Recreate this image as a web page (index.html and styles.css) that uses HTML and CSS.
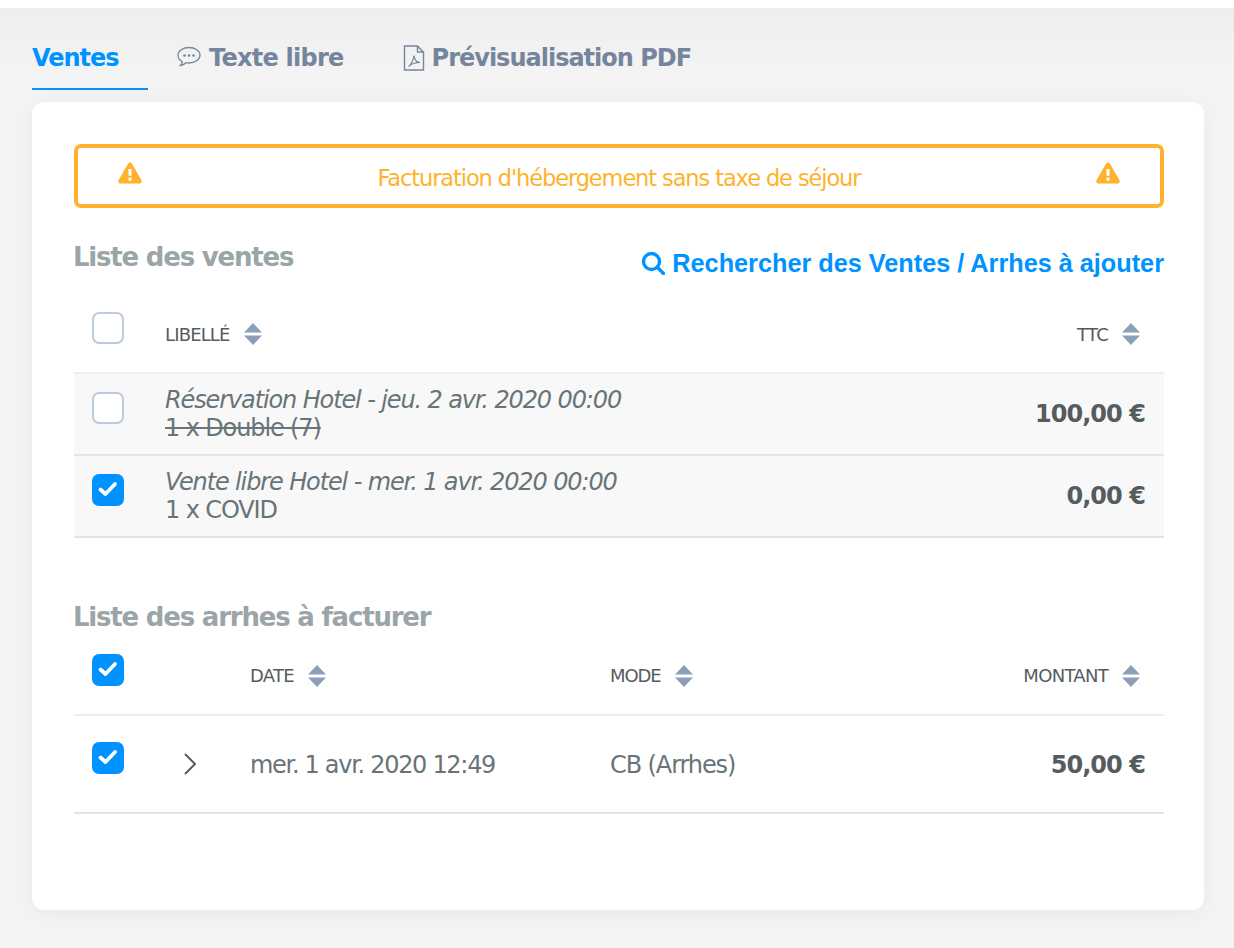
FILE: index.html
```html
<!DOCTYPE html>
<html lang="fr">
<head>
<meta charset="utf-8">
<title>Facture</title>
<link rel="stylesheet" href="styles.css">
</head>
<body>
<svg class="defs" width="0" height="0" aria-hidden="true">
  <symbol id="sort" viewBox="0 0 18 22"><path d="M9 0 18 9.600H0Z M0 12.400H18L9 22Z"/></symbol>
  <symbol id="warn" viewBox="0 0 24 22"><path fill-rule="evenodd" d="M12 0.500c.8 0 1.500.4 1.900 1.100l9.600 16.700c.8 1.400-.2 3.200-1.900 3.200H2.400c-1.700 0-2.700-1.800-1.900-3.200L10.100 1.600C10.500.9 11.200.5 12 .5ZM10.300 7l.3 6.800h2.800l.3-6.800ZM10.500 15.500v3.200h3v-3.200Z"/></symbol>
  <symbol id="check" viewBox="0 0 32 32"><path d="M8.500 15.500 13.500 20 23 10" fill="none" stroke="#fff" stroke-width="3.800" stroke-linecap="round" stroke-linejoin="round"/></symbol>
</svg>
<main class="page">
  <nav class="tabs">
    <a class="tab active">Ventes</a>
    <a class="tab tab-chat">
      <svg class="tab-icon" width="26" height="22" viewBox="0 0 26 22" fill="none" stroke="#75869c" stroke-width="1.300"><path d="M13 2.500c6 0 11 3.400 11 7.800s-5 7.700-11 7.700c-1 0-2-.1-2.900-.3C8.600 19.300 6.900 20 4.500 20.500c1-1.200 1.700-2.400 1.900-3.700C3.600 15.400 2 13 2 10.300 2 5.900 7 2.500 13 2.500Z"/><circle cx="8.500" cy="10.500" r="1.300" fill="#75869c" stroke="none"/><circle cx="13" cy="10.500" r="1.300" fill="#75869c" stroke="none"/><circle cx="17.500" cy="10.500" r="1.300" fill="#75869c" stroke="none"/></svg>
      Texte libre
    </a>
    <a class="tab tab-pdf">
      <svg class="tab-icon" width="22" height="26" viewBox="0 0 22 26" fill="none" stroke="#75869c" stroke-width="1.400"><path d="M1.500 1h13l6 6v18h-19Z M14.500 1v6h6"/><path d="M5.500 21.500c2-1 5-6 5.500-11 .3 4 3 6.500 6 7-3-.2-8.500 1-11.500 4Z" stroke-width="1.200"/></svg>
      Prévisualisation PDF
    </a>
  </nav>
  <section class="card">
    <div class="alert">
      <svg class="warn" width="24" height="22"><use href="#warn"/></svg>
      <span class="alert-text">Facturation d'hébergement sans taxe de séjour</span>
      <svg class="warn" width="24" height="22"><use href="#warn"/></svg>
    </div>
    <div class="title-row">
      <h2 class="section-title">Liste des ventes</h2>
      <a class="search-link">
        <svg width="24" height="24" viewBox="0 0 24 24" fill="none" stroke="#0093ff" stroke-width="3.400"><circle cx="10.500" cy="10.500" r="8"/><path d="m16.500 16.500 6 6" stroke-linecap="round"/></svg>
        Rechercher des Ventes / Arrhes à ajouter
      </a>
    </div>
    <div class="sales-table">
      <div class="row sales-row head">
        <span class="box"></span>
        <span class="th th-label">LIBELLÉ <svg class="sort"><use href="#sort"/></svg></span>
        <span class="th right">TTC <svg class="sort"><use href="#sort"/></svg></span>
      </div>
      <div class="row sales-row item">
        <span class="box"></span>
        <div class="desc"><em>Réservation Hotel - jeu. 2 avr. 2020 00:00</em><s>1 x Double (7)</s></div>
        <strong class="amount">100,00 €</strong>
      </div>
      <div class="row sales-row item">
        <span class="box on"><svg width="32" height="32"><use href="#check"/></svg></span>
        <div class="desc"><em>Vente libre Hotel - mer. 1 avr. 2020 00:00</em><span>1 x COVID</span></div>
        <strong class="amount">0,00 €</strong>
      </div>
    </div>
    <h2 class="section-title second">Liste des arrhes à facturer</h2>
    <div class="deposit-table">
      <div class="row deposit-row deposit-head">
        <span class="box on"><svg width="32" height="32"><use href="#check"/></svg></span>
        <span></span>
        <span class="th">DATE <svg class="sort"><use href="#sort"/></svg></span>
        <span class="th th-mode">MODE <svg class="sort"><use href="#sort"/></svg></span>
        <span class="th right">MONTANT <svg class="sort"><use href="#sort"/></svg></span>
      </div>
      <div class="row deposit-row deposit-item">
        <span class="box on"><svg width="32" height="32"><use href="#check"/></svg></span>
        <svg class="chevron" width="14" height="24" viewBox="0 0 14 24" fill="none" stroke="#555c60" stroke-width="2"><path d="M2 2 12 12 2 22"/></svg>
        <span class="cell cell-date">mer. 1 avr. 2020 12:49</span>
        <span class="cell">CB (Arrhes)</span>
        <strong class="amount">50,00 €</strong>
      </div>
    </div>
  </section>
</main>
</body>
</html>
```
FILE: styles.css
```css
* { box-sizing: border-box; }
html, body { margin: 0; height: 948px; overflow: hidden; background: #fff; }
body { font-family: "DejaVu Sans", Verdana, sans-serif; color: #687478; }
.defs { position: absolute; }
.page {
  margin-top: 8px;
  height: 940px;
  padding: 0 30px 0 32px;
  background: linear-gradient(180deg, #eeeeef 0, #f4f4f5 70px, #f4f4f5 100%);
}
.tabs { display: flex; height: 94px; padding-top: 28px; }
.tab {
  display: flex; align-items: flex-start; gap: 7px;
  height: 54px; padding-top: 7px;
  font-size: 24px; line-height: 30px; font-weight: 700; color: #75869c;
  letter-spacing: -1px;
}
.tab.active { width: 116px; color: #0093ff; border-bottom: 2px solid #0093ff; letter-spacing: -1.05px; }
.tab-chat { margin-left: 28px; letter-spacing: -.75px; }
.tab-pdf { margin-left: 59px; }
.tab-icon { margin-top: 2px; flex: none; }
.card {
  height: 808px;
  padding: 42px 40px 0 42px;
  background: #fff;
  border-radius: 12px;
  box-shadow: 0 4px 24px rgba(0,0,0,.05);
}
.alert {
  display: flex; justify-content: space-between; align-items: flex-start;
  height: 64px; padding: 14px 40px 0;
  border: 4px solid #ffb22b; border-radius: 7px;
  color: #ffb22b;
}
.warn { fill: #ffb22b; flex: none; }
.alert-text { margin-top: 1px; font-size: 22.5px; line-height: 30px; letter-spacing: -1.1px; }
.title-row { display: flex; justify-content: space-between; height: 90px; padding-top: 31px; }
.section-title { margin: 0 0 0 -1px; font-size: 26px; line-height: 36px; font-weight: 700; color: #9aa5a8; letter-spacing: -1.2px; }
.search-link {
  display: flex; align-items: center; gap: 7px; height: 30px; margin-top: 9px;
  font-family: "Liberation Sans", Arial, sans-serif; font-size: 25.25px; font-weight: 700; color: #0093ff;
}
.row { display: grid; align-items: center; }
.sales-row { grid-template-columns: 73px 1fr 180px; padding-left: 18px; border-bottom: 2px solid #dde5ed; }
.sales-row.head { height: 76px; border-bottom-color: #eeeeee; }
.sales-row.head .box { margin-bottom: 14px; }
.sales-row.head .th { padding-bottom: 2px; }
.sales-row.item { height: 82px; background: #f8f8f8; }
.box {
  display: block; width: 32px; height: 32px; margin-bottom: 12px;
  border: 2px solid #bccbdc; border-radius: 7px; background: #fff;
}
.box.on { background: #0093ff; border: 0; }
.box svg { display: block; }
.th { display: flex; align-items: center; gap: 14px; font-size: 18px; color: #555c60; letter-spacing: -.7px; }
.th.right { justify-content: flex-end; padding-right: 24px; }
.th-label { letter-spacing: -.85px; }
.th-mode { letter-spacing: -1.1px; }
.sort { width: 18px; height: 22px; fill: #8c9fb8; }
.desc { display: flex; flex-direction: column; font-size: 24px; line-height: 28px; letter-spacing: -1.12px; color: #687478; }
.desc em, .desc s, .desc span { display: block; }
.amount { font-size: 24px; font-weight: 700; color: #555c60; text-align: right; padding-right: 19px; letter-spacing: -.95px; }
.second { margin-top: 61px; }
.deposit-row { grid-template-columns: 72px 86px 360px 1fr 200px; padding-left: 18px; }
.deposit-head { height: 81px; border-bottom: 2px solid #eeeeee; }
.deposit-head .box { margin-bottom: 9px; }
.deposit-head .th { padding-top: 2px; }
.deposit-item { height: 98px; border-bottom: 2px solid #dde5ed; }
.deposit-item .box { margin-bottom: 12px; }
.chevron { margin-left: 19px; }
.cell { padding-top: 2px; font-size: 24px; letter-spacing: -1.1px; color: #687478; }
.cell-date { letter-spacing: -1.3px; }
.deposit-item .amount { padding-top: 2px; }
```
